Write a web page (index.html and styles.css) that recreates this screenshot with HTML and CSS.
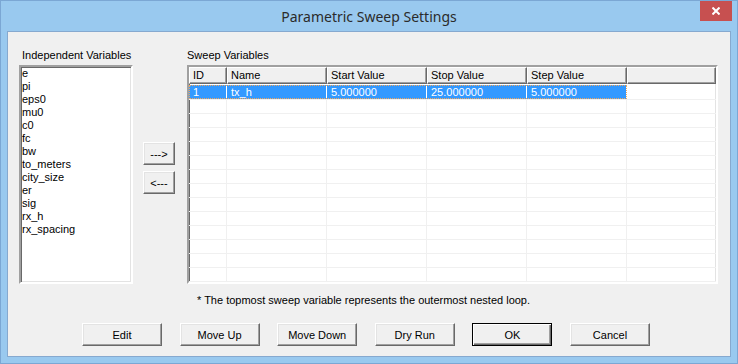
FILE: index.html
```html
<!DOCTYPE html>
<html lang="en">
<head>
  <meta charset="UTF-8">
  <title>Parametric Sweep Settings</title>
  <link rel="stylesheet" href="styles.css">
</head>
<body>
  <div class="window">
    <div class="titlebar">
      <span class="title">Parametric Sweep Settings</span>
      <button class="close" title="Close">
        <svg width="8" height="8" viewBox="0 0 8 8"><path d="M0.5 0.5 L7.5 7.5 M7.5 0.5 L0.5 7.5" stroke="#fff" stroke-width="2"/></svg>
      </button>
    </div>

    <div class="client">
      <div class="main">
        <div class="col-left">
          <div class="label indent">Independent Variables</div>
          <ul class="listbox">
            <li>e</li>
            <li>pi</li>
            <li>eps0</li>
            <li>mu0</li>
            <li>c0</li>
            <li>fc</li>
            <li>bw</li>
            <li>to_meters</li>
            <li>city_size</li>
            <li>er</li>
            <li>sig</li>
            <li>rx_h</li>
            <li>rx_spacing</li>
          </ul>
        </div>

        <div class="col-mid">
          <button class="btn arrow">---&gt;</button>
          <button class="btn arrow">&lt;---</button>
        </div>

        <div class="col-right">
          <div class="label">Sweep Variables</div>
          <div class="grid">
            <div class="head">
              <div class="h id">ID</div>
              <div class="h wide">Name</div>
              <div class="h wide">Start Value</div>
              <div class="h wide">Stop Value</div>
              <div class="h wide">Step Value</div>
              <div class="h fill"></div>
            </div>
            <div class="rows">
              <div class="row first sel">
                <div class="rec">
                  <div class="c id">1</div>
                  <div class="c wide">tx_h</div>
                  <div class="c wide">5.000000</div>
                  <div class="c wide">25.000000</div>
                  <div class="c wide">5.000000</div>
                </div>
                <div class="c fill"></div>
              </div>
              <div class="row"><div class="rec"><div class="c id"></div><div class="c wide"></div><div class="c wide"></div><div class="c wide"></div><div class="c wide"></div></div><div class="c fill"></div></div>
              <div class="row"><div class="rec"><div class="c id"></div><div class="c wide"></div><div class="c wide"></div><div class="c wide"></div><div class="c wide"></div></div><div class="c fill"></div></div>
              <div class="row"><div class="rec"><div class="c id"></div><div class="c wide"></div><div class="c wide"></div><div class="c wide"></div><div class="c wide"></div></div><div class="c fill"></div></div>
              <div class="row"><div class="rec"><div class="c id"></div><div class="c wide"></div><div class="c wide"></div><div class="c wide"></div><div class="c wide"></div></div><div class="c fill"></div></div>
              <div class="row"><div class="rec"><div class="c id"></div><div class="c wide"></div><div class="c wide"></div><div class="c wide"></div><div class="c wide"></div></div><div class="c fill"></div></div>
              <div class="row"><div class="rec"><div class="c id"></div><div class="c wide"></div><div class="c wide"></div><div class="c wide"></div><div class="c wide"></div></div><div class="c fill"></div></div>
              <div class="row"><div class="rec"><div class="c id"></div><div class="c wide"></div><div class="c wide"></div><div class="c wide"></div><div class="c wide"></div></div><div class="c fill"></div></div>
              <div class="row"><div class="rec"><div class="c id"></div><div class="c wide"></div><div class="c wide"></div><div class="c wide"></div><div class="c wide"></div></div><div class="c fill"></div></div>
              <div class="row"><div class="rec"><div class="c id"></div><div class="c wide"></div><div class="c wide"></div><div class="c wide"></div><div class="c wide"></div></div><div class="c fill"></div></div>
              <div class="row"><div class="rec"><div class="c id"></div><div class="c wide"></div><div class="c wide"></div><div class="c wide"></div><div class="c wide"></div></div><div class="c fill"></div></div>
              <div class="row"><div class="rec"><div class="c id"></div><div class="c wide"></div><div class="c wide"></div><div class="c wide"></div><div class="c wide"></div></div><div class="c fill"></div></div>
              <div class="row"><div class="rec"><div class="c id"></div><div class="c wide"></div><div class="c wide"></div><div class="c wide"></div><div class="c wide"></div></div><div class="c fill"></div></div>
              <div class="row"><div class="rec"><div class="c id"></div><div class="c wide"></div><div class="c wide"></div><div class="c wide"></div><div class="c wide"></div></div><div class="c fill"></div></div>
              <div class="row"><div class="rec"><div class="c id"></div><div class="c wide"></div><div class="c wide"></div><div class="c wide"></div><div class="c wide"></div></div><div class="c fill"></div></div>
            </div>
          </div>
          <p class="note">* The topmost sweep variable represents the outermost nested loop.</p>
        </div>
      </div>

      <div class="actions">
        <button class="btn">Edit</button>
        <button class="btn">Move Up</button>
        <button class="btn">Move Down</button>
        <button class="btn">Dry Run</button>
        <button class="btn default">OK</button>
        <button class="btn">Cancel</button>
      </div>
    </div>
  </div>
</body>
</html>
```

FILE: styles.css
```css
/* General */
body {
  margin: 0;
  background: #fff;
  font-family: 'Liberation Sans', Arial, sans-serif;
  font-size: 11px;
  color: #000;
}

/* Window frame */
.window {
  width: 738px;
  height: 364px;
  box-sizing: border-box;
  border: 1px solid #7ba7d4;
  background: #99c9ef;
  padding: 0 6px 6px 6px;
}

.titlebar {
  position: relative;
  height: 30px;
  display: flex;
  align-items: center;
  justify-content: center;
}

.title {
  font-family: 'Noto Sans', sans-serif;
  font-size: 14px;
  color: #2b2b2b;
  margin-top: 1px;
}

.close {
  position: absolute;
  top: 0;
  right: -1px;
  width: 32px;
  height: 20px;
  border: none;
  padding: 0;
  background: #c75050;
  display: flex;
  align-items: center;
  justify-content: center;
}

/* Client area */
.client {
  height: 326px;
  box-sizing: border-box;
  border: 1px solid #86a9cf;
  background: #f0f0f0;
}

.main {
  display: flex;
  padding: 17px 0 0 11px;
}

.label {
  line-height: 13px;
  height: 13px;
  margin-bottom: 3px;
}

.indent {
  padding-left: 3px;
}

/* Listbox */
.listbox {
  list-style: none;
  margin: 0;
  width: 114px;
  height: 219px;
  box-sizing: border-box;
  padding: 0 0 0 1px;
  background: #fff;
  border-style: solid;
  border-width: 2px;
  border-color: #a0a0a0 #fff #fff #a0a0a0;
  box-shadow: inset 1px 1px #696969, inset -1px -1px #e3e3e3;
}

.listbox li {
  line-height: 13px;
}

/* Arrow buttons */
.col-mid {
  display: flex;
  flex-direction: column;
  gap: 6px;
  margin: 93px 0 0 10px;
}

.btn {
  font-family: 'Liberation Sans', Arial, sans-serif;
  font-size: 11px;
  color: #000;
  background: #f0f0f0;
  width: 80px;
  height: 23px;
  padding: 0;
  border-style: solid;
  border-width: 1px;
  border-color: #fff #696969 #696969 #fff;
  box-shadow: inset -1px -1px #a0a0a0, inset 1px 1px #e3e3e3;
}

.btn.arrow {
  width: 32px;
}

.btn.default {
  border: 1px solid #000;
  box-shadow: inset 1px 1px #fff, inset -1px -1px #696969, inset -2px -2px #a0a0a0;
}

/* Sweep grid */
.col-right {
  margin-left: 12px;
}

.grid {
  width: 531px;
  height: 219px;
  box-sizing: border-box;
  background: #fff;
  border-style: solid;
  border-width: 2px;
  border-color: #a0a0a0 #fff #fff #a0a0a0;
  box-shadow: inset 1px 1px #696969, inset -1px -1px #e3e3e3;
  overflow: hidden;
}

.head {
  display: flex;
  height: 17px;
  margin-bottom: 1px;
}

.h {
  box-sizing: border-box;
  height: 17px;
  line-height: 15px;
  padding-left: 3px;
  background: #f0f0f0;
  border-top: 1px solid #fff;
  border-left: 1px solid #fff;
  border-right: 1px solid #696969;
  border-bottom: 1px solid #696969;
  box-shadow: inset -1px -1px #a0a0a0;
  white-space: nowrap;
}

.id { width: 38px; }
.wide { width: 100px; }
.fill { width: 89px; }

.rows {
  display: flex;
  flex-direction: column;
}

.row {
  display: flex;
  box-sizing: border-box;
  height: 14px;
  flex-shrink: 0;
  border-bottom: 1px solid #f0f0f0;
}

.row.first {
  height: 15px;
}

.rec {
  display: flex;
}

.c {
  box-sizing: border-box;
  height: 100%;
  line-height: 13px;
  padding-left: 4px;
  border-right: 1px solid #f0f0f0;
  white-space: nowrap;
}

.first .c {
  line-height: 14px;
}

.c.fill {
  border-right: none;
}

.sel .rec {
  background: #3399ff;
  color: #fff;
  outline: 1px dotted #f2a65a;
  outline-offset: -1px;
}

.sel .rec .c {
  border-right-color: #fff;
}

.note {
  margin: 10px 0 0 10px;
  line-height: 13px;
}

/* Bottom buttons */
.actions {
  display: flex;
  gap: 17.6px;
  padding: 16px 0 0 74px;
}
```
